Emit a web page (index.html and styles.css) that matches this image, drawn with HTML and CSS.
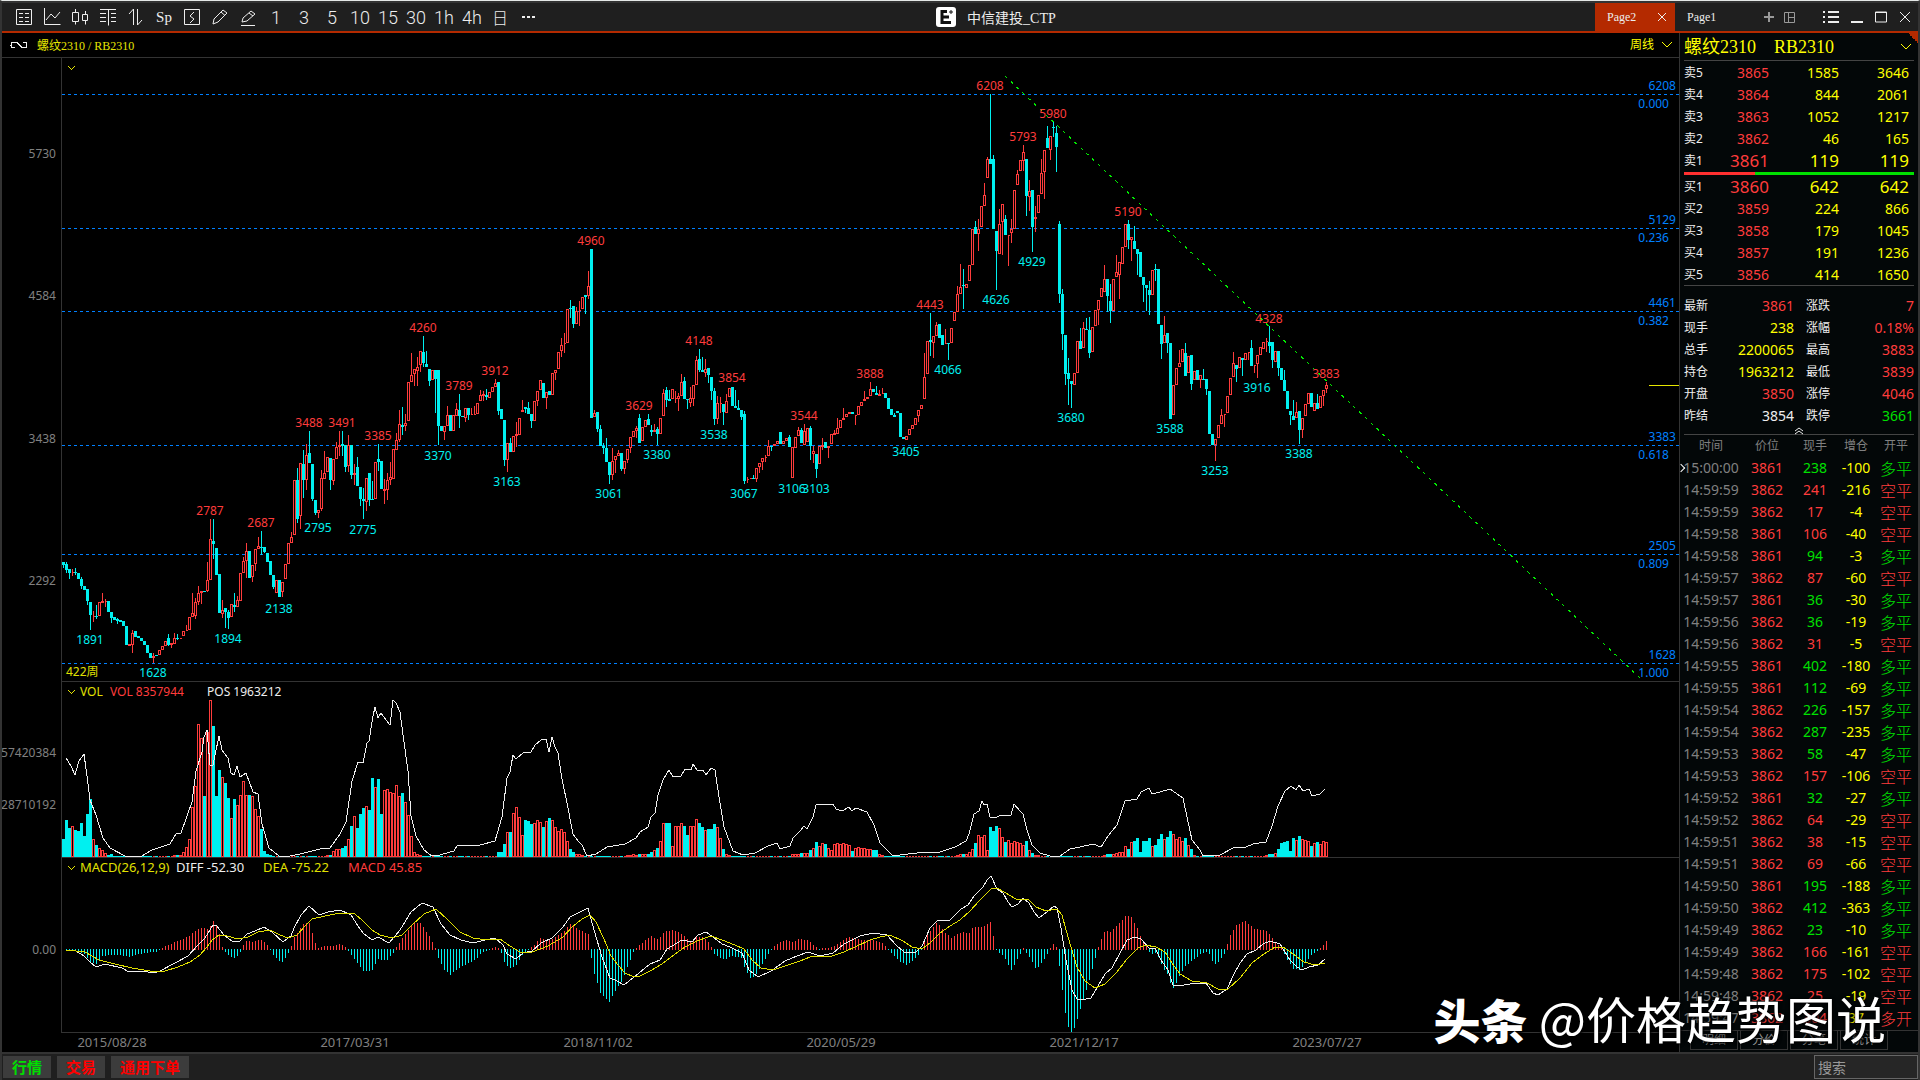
FILE: index.html
```html
<!DOCTYPE html>
<html lang="zh-CN">
<head>
    <meta charset="UTF-8">
    <meta name="viewport" content="width=device-width, initial-scale=1.0">
    <title>中信建投_CTP</title>
    <link rel="stylesheet" href="styles.css">
</head>
<body>

<header class="titlebar">
    <div class="tools">
        <button aria-label="报价"><svg width="18" height="18"><path d="M1.5 1.5h15v15h-15zM4 5.500h4M10 5.500h4M4 9.500h4M10 9.500h4M4 13.500h4M10 13.500h4"/></svg></button>
        <button aria-label="分时"><svg width="18" height="18"><path d="M1.500 0v16.500h16M3 12l5-6 4 4 5-6"/></svg></button>
        <button aria-label="K线"><svg width="18" height="18"><path d="M1.500 4.500h6v9h-6zM4.500 1v3.500M4.500 13.500v3M11.500 6.500h5v6h-5zM14.500 3v3.500M14.500 12.500v4"/></svg></button>
        <button aria-label="T型报价"><svg width="18" height="18"><path d="M1 1.500h16M9.500 1.500v16M1 5.500h6M12 5.500h5M1 9.500h6M12 9.500h5M1 13.500h6M12 13.500h5"/></svg></button>
        <button aria-label="排序"><svg width="18" height="18"><path d="M2 6l4.500-5v16M10.500 1v16l4.500-5"/></svg></button>
        <button class="sp">Sp</button>
        <button aria-label="闪电"><svg width="18" height="18"><path d="M1.500 1.500h15v15h-15zM11 4l-4 4 4 3-4 4"/></svg></button>
        <button aria-label="画线"><svg width="18" height="18"><path d="M2 16l1-5 9-9 4 3-9 9zM10 4l4 3.500"/></svg></button>
        <button aria-label="标注"><svg width="18" height="18"><path d="M3 14l1-4 8-7 4 3-8 7zM10 5l4 3M2 17.500h14"/></svg></button>
        <button>1</button>
        <button>3</button>
        <button>5</button>
        <button>10</button>
        <button>15</button>
        <button>30</button>
        <button>1h</button>
        <button>4h</button>
        <button class="day">日</button>
        <button aria-label="更多"><svg width="18" height="18"><path class="solid" d="M3 8h3v2h-3zM8 8h3v2h-3zM13 8h3v2h-3z"/></svg></button>
    </div>
    <div class="app-title">
        <svg width="20" height="20"><rect class="logo-bg" width="20" height="20" rx="3"/><path class="logo-e" d="M6 4.500h5M6 15.500h9M6 10h7M6 3v14"/><path class="logo-star" d="M13 5h4M15 3v4"/></svg>
        <span>中信建投_CTP</span>
    </div>
    <nav class="tabs">
        <a class="tab active" href="#">Page2 <svg width="10" height="10"><path d="M1 1l8 8M9 1l-8 8"/></svg></a>
        <a class="tab" href="#">Page1</a>
    </nav>
    <div class="window-buttons">
        <button class="dim" aria-label="新建"><svg width="12" height="12"><path class="thick" d="M6 1v10M1 6h10"/></svg></button>
        <button class="dim" aria-label="布局"><svg width="12" height="12"><path d="M1.500 1.500h10v10h-10zM5.500 1v10M5 6.500h6"/></svg></button>
        <button class="gap" aria-label="菜单"><svg width="16" height="14"><path class="thick" d="M0 2h2M5 2h11M0 7h2M5 7h11M0 12h2M5 12h11"/></svg></button>
        <button aria-label="最小化"><svg width="12" height="12"><path class="thick" d="M0 11h12"/></svg></button>
        <button aria-label="最大化"><svg width="12" height="12"><path d="M.5 1h11v10h-11zM0 1.500h12"/></svg></button>
        <button aria-label="关闭"><svg width="12" height="12"><path d="M1 1l10 10M11 1l-10 10"/></svg></button>
    </div>
</header>

<main class="workspace">
    <section class="chart">
        <div class="chart-head">
            <svg class="link-icon" width="18" height="10"><path d="M5 2.500h-3.500v5h3.500M5 2.500h2l5 5M13 2.500h3.500v5h-5M0 5.500h2"/></svg>
            <h1>螺纹2310 / RB2310</h1>
            <label class="period">
                <select aria-label="周期"><option>周线</option><option>日线</option></select>
                <svg width="12" height="8"><path d="M1 1l5 5 5-5"/></svg>
            </label>
        </div>
        <svg class="plot" viewBox="2 58 1677 994" id="plot">
            <path class="frame" d="M2 57.500H1679M61.500 58V1032.500M61 681.500H1679M61 857.500H1679M61 1032.500H1679"/>
            <g class="axis">
                <text x="56" y="158">5730</text>
                <text x="56" y="300">4584</text>
                <text x="56" y="443">3438</text>
                <text x="56" y="585">2292</text>
                <text x="56" y="757">57420384</text>
                <text x="56" y="809">28710192</text>
                <text x="56" y="954">0.00</text>
            </g>
            <g class="dates">
                <text x="112" y="1047">2015/08/28</text>
                <text x="355" y="1047">2017/03/31</text>
                <text x="598" y="1047">2018/11/02</text>
                <text x="841" y="1047">2020/05/29</text>
                <text x="1084" y="1047">2021/12/17</text>
                <text x="1327" y="1047">2023/07/27</text>
            </g>
            <path class="chevron" d="M68 66l3.500 3.500 3.500-3.500M68 690l3.500 3.500 3.500-3.500M68 866l3.500 3.500 3.500-3.500"/>
            <text class="yellow" x="66" y="676">422周</text>
            <text class="yellow" x="80" y="696">VOL</text>
            <text class="red" x="110" y="696">VOL 8357944</text>
            <text class="white" x="207" y="696">POS 1963212</text>
            <g class="macd-legend">
                <text class="yellow" x="80" y="872">MACD(26,12,9)</text>
                <text class="white" x="176" y="872">DIFF -52.30</text>
                <text class="yellow" x="263" y="872">DEA -75.22</text>
                <text class="red" x="348" y="872">MACD 45.85</text>
            </g>
            <path class="last" d="M1649 385.500H1679"/>
            <g id="series"></g>
        </svg>
    </section>

    <aside class="quote">
        <h2>螺纹2310 <span>RB2310</span><button aria-label="展开"><svg width="12" height="8"><path d="M1 1l5 5 5-5"/></svg></button></h2>
        <table class="depth">
            <tbody>
                <tr><th>卖5</th><td>3865</td><td>1585</td><td>3646</td></tr>
                <tr><th>卖4</th><td>3864</td><td>844</td><td>2061</td></tr>
                <tr><th>卖3</th><td>3863</td><td>1052</td><td>1217</td></tr>
                <tr><th>卖2</th><td>3862</td><td>46</td><td>165</td></tr>
                <tr class="best"><th>卖1</th><td>3861</td><td>119</td><td>119</td></tr>
            </tbody>
        </table>
        <div class="ratio"></div>
        <table class="depth">
            <tbody>
                <tr class="best"><th>买1</th><td>3860</td><td>642</td><td>642</td></tr>
                <tr><th>买2</th><td>3859</td><td>224</td><td>866</td></tr>
                <tr><th>买3</th><td>3858</td><td>179</td><td>1045</td></tr>
                <tr><th>买4</th><td>3857</td><td>191</td><td>1236</td></tr>
                <tr><th>买5</th><td>3856</td><td>414</td><td>1650</td></tr>
            </tbody>
        </table>
        <table class="stats">
            <tbody>
                <tr><th>最新</th><td class="red">3861</td><th>涨跌</th><td class="red">7</td></tr>
                <tr><th>现手</th><td class="yellow">238</td><th>涨幅</th><td class="red">0.18%</td></tr>
                <tr><th>总手</th><td class="yellow">2200065</td><th>最高</th><td class="red">3883</td></tr>
                <tr><th>持仓</th><td class="yellow">1963212</td><th>最低</th><td class="red">3839</td></tr>
                <tr><th>开盘</th><td class="red">3850</td><th>涨停</th><td class="red">4046</td></tr>
                <tr><th>昨结</th><td class="white">3854</td><th>跌停</th><td class="green">3661</td></tr>
            </tbody>
        </table>
        <button class="collapse" aria-label="收起"><svg width="10" height="8"><path d="M1 4l4-3 4 3M1 7l4-3 4 3"/></svg></button>
        <table class="ticks">
            <thead><tr><th>时间</th><th>价位</th><th>现手</th><th>增仓</th><th>开平</th></tr></thead>
            <tbody id="ticks"></tbody>
        </table>
        <nav class="views">
            <a href="#">明细</a><a href="#">分价</a><a href="#">分笔</a><a href="#">统计</a>
        </nav>
    </aside>
</main>

<footer class="statusbar">
    <button class="on">行情</button>
    <button>交易</button>
    <button>通用下单</button>
    <input type="text" placeholder="搜索" aria-label="搜索">
</footer>

<div class="watermark"><b>头条</b> @价格趋势图说</div>

<script src="chart.js"></script>
</body>
</html>
```

FILE: styles.css
```css
* {
    box-sizing: border-box;
}
body {
    margin: 0;
    height: 100vh;
    display: flex;
    flex-direction: column;
    overflow: hidden;
    background-color: #000;
    border: 2px solid #333;
    border-top: 1px solid #e4e8e6;
    border-bottom: none;
    color: #eee;
    font-family: "Noto Sans", "Noto Sans CJK SC", sans-serif;
    font-size: 12px;
}
button, select, input {
    margin: 0;
    padding: 0;
    border: none;
    background: none;
    color: inherit;
    font: inherit;
}
a {
    color: inherit;
    text-decoration: none;
}
svg {
    display: block;
    fill: none;
    stroke: currentColor;
}
table {
    border-collapse: collapse;
    table-layout: fixed;
    width: 100%;
}
th, td {
    padding: 0;
    font-weight: normal;
    white-space: nowrap;
}
.red { color: #ff3c3c; }
.yellow { color: #ff0; }
.white { color: #eee; }
.green { color: #00e000; }

/* top bar */
.titlebar {
    flex: none;
    display: flex;
    align-items: center;
    height: 32px;
    border-top: 2px solid #333;
    border-bottom: 2px solid #b42a00;
    background-color: #1f1f1f;
    font-family: "Liberation Serif", "Noto Sans CJK SC", serif;
}
.tools {
    flex: 0 0 48.75%;
    display: flex;
    padding-left: 8px;
}
.tools button {
    display: flex;
    justify-content: center;
    align-items: center;
    width: 28px;
    height: 24px;
    font: 300 18px Roboto, sans-serif;
}
.tools .sp {
    font: 15px "Liberation Serif", serif;
}
.tools .day {
    font: 300 16px "Noto Sans CJK SC", sans-serif;
}
.solid {
    fill: currentColor;
    stroke: none;
}
.thick {
    stroke-width: 2;
}
.app-title {
    flex: 1;
    display: flex;
    align-items: center;
    gap: 11px;
    font-size: 14px;
}
.logo-bg {
    fill: #fff;
    stroke: none;
}
.logo-e {
    stroke: #111;
    stroke-width: 3;
}
.logo-star {
    stroke: #111;
}
.tabs {
    display: flex;
    align-self: stretch;
}
.tab {
    display: flex;
    align-items: center;
    justify-content: space-between;
    width: 80px;
    padding: 0 8px 0 12px;
}
.tab.active {
    background-color: #b42a00;
}
.window-buttons {
    display: flex;
    align-items: center;
    gap: 12px;
    padding: 0 7px 0 8px;
}
.window-buttons .dim {
    color: #999;
    margin-right: -4px;
}
.window-buttons .gap {
    margin-left: 20px;
}

/* main area */
.workspace {
    flex: 1;
    display: flex;
    min-height: 0;
}
.chart {
    flex: 1;
    min-width: 0;
    overflow: hidden;
}
.chart-head {
    display: flex;
    align-items: center;
    height: 25px;
    padding: 0 6px 0 8px;
    border-bottom: 1px solid #333;
    font-family: "Liberation Serif", "Noto Sans CJK SC", serif;
}
.chart-head h1 {
    margin: 0 auto 0 9px;
    color: #e6e600;
    font-size: 12px;
    font-weight: normal;
}
.link-icon {
    shape-rendering: crispEdges;
}
.period {
    display: flex;
    align-items: center;
    gap: 6px;
    color: #ff0;
}
.period select {
    appearance: none;
}
.plot {
    width: 100%;
    height: auto;
    shape-rendering: crispEdges;
}
.plot text {
    stroke: none;
    fill: currentColor;
    font-size: 12px;
}
.plot .axis {
    color: #808080;
    text-anchor: end;
}
.plot .dates {
    color: #808080;
    text-anchor: middle;
}
.plot .dates text, .plot .macd-legend text {
    font-size: 13px;
}
.plot .frame {
    stroke: #333;
}
.plot .chevron, .plot .last {
    stroke: #e6e600;
}
.plot .yellow {
    color: #e0e000;
}
.plot .peak {
    color: #ff3c3c;
    text-anchor: middle;
}
.plot .trough {
    color: #00f0f0;
    text-anchor: middle;
}
.plot .fib-line {
    stroke: #0080ff;
    stroke-dasharray: 3 3;
}
.plot .fib-text {
    color: #0080ff;
    text-anchor: end;
}
.plot .trend {
    stroke: #00f000;
    stroke-dasharray: 3 5;
}
.plot .up {
    stroke: #ff3c3c;
    fill: #000;
}
.plot .down {
    stroke: none;
    fill: #00f0f0;
}
.plot .down-line {
    stroke: #00f0f0;
}
.plot .pos {
    stroke: #f0f0f0;
}
.plot .dea {
    stroke: #e0e000;
}

/* quote panel */
.quote {
    flex: 0 0 239px;
    display: flex;
    flex-direction: column;
    overflow: hidden;
    border-left: 1px solid #333;
    background: linear-gradient(to bottom left, #b42a00 50%, transparent 50%) top right / 10px 10px no-repeat #030708;
    font-size: 14px;
}
.quote h2 {
    flex: none;
    display: flex;
    align-items: baseline;
    height: 28px;
    margin: 0 4px;
    border-bottom: 1px solid #444;
    color: #ff0;
    font: 18px/28px "Liberation Serif", "Noto Sans CJK SC", serif;
}
.quote h2 span {
    margin: 0 auto 0 18px;
}
.quote h2 button {
    align-self: center;
    margin-right: 2px;
}
.quote th {
    font-size: 12px;
    text-align: left;
}
.quote td, .quote th {
    height: 22px;
    line-height: 20px;
}
.depth {
    margin: 1px 9px 0 4px;
    width: calc(100% - 13px);
    color: #ff0;
    text-align: right;
}
.depth th {
    width: 30px;
    color: #eee;
}
.depth td:nth-child(2) {
    width: 55px;
    color: #ff3c3c;
}
.depth .best td {
    font-size: 17px;
}
.ratio {
    flex: none;
    height: 3px;
    margin: 0 4px;
    background: linear-gradient(to right, #ff3030 31%, #00e000 31%);
}
.stats {
    width: calc(100% - 8px);
    margin: 9px 4px 0;
    text-align: right;
    box-shadow: 0 -9px #030708, 0 -10px #444;
}
.stats th {
    width: 28px;
}
.stats th:nth-child(3) {
    width: 40px;
    padding-left: 12px;
}
.stats td:nth-child(2) {
    width: 82px;
}
.collapse {
    flex: none;
    display: flex;
    justify-content: center;
    height: 8px;
    margin: 0 4px;
    border-bottom: 1px solid #444;
}
.ticks {
    text-align: center;
}
.ticks th {
    color: #808080;
    text-align: center;
}
.ticks th:nth-child(1) { width: 62px; }
.ticks th:nth-child(2) { width: 50px; }
.ticks th:nth-child(3) { width: 46px; }
.ticks th:nth-child(4) { width: 36px; }
.ticks td:first-child {
    color: #808080;
}
.ticks td:nth-child(4) {
    color: #ff0;
}
.ticks td:last-child {
    font: 300 16px/20px "Noto Sans CJK SC", sans-serif;
}
/* marker on the newest tick */
.ticks tr:first-child td:first-child {
    position: relative;
}
.ticks tr:first-child td:first-child::before {
    content: "";
    position: absolute;
    left: -2px;
    top: 8px;
    width: 5px;
    height: 5px;
    border: 1px solid #fff;
    border-width: 1px 1px 0 0;
    transform: rotate(45deg);
}
.views {
    flex: none;
    display: flex;
    gap: 2px;
    height: 22px;
    margin-top: auto;
    padding-left: 10px;
    border-top: 1px solid #333;
    color: #999;
    font-size: 12px;
    line-height: 18px;
}
.views a {
    width: 48px;
    height: 19px;
    border: 1px solid #333;
    border-top: none;
    text-align: center;
}

/* bottom bar */
.statusbar {
    flex: none;
    display: flex;
    align-items: center;
    gap: 6px;
    height: 28px;
    padding-left: 1px;
    border-top: 2px solid #333;
    background-color: #1f1f1f;
}
.statusbar button {
    height: 22px;
    padding: 0 9px;
    background-color: #3c3c3c;
    color: #f00;
    font: bold 15px/22px "Noto Sans CJK SC", sans-serif;
}
.statusbar .on {
    color: #00e000;
}
.statusbar input {
    width: 104px;
    height: 24px;
    margin-left: auto;
    padding-left: 3px;
    border: 1px solid #666;
    background-color: #262626;
    font-size: 14px;
}
.statusbar input::placeholder {
    color: #999;
}

.watermark {
    position: absolute;
    right: 34px;
    bottom: 26px;
    color: #fff;
    font-family: "Noto Sans CJK SC", sans-serif;
    font-size: 50px;
    line-height: 70px;
    text-shadow: 0 0 4px #000, 1px 1px 3px #000;
    pointer-events: none;
}
.watermark b {
    font-size: 47px;
    font-weight: 900;
}
```

FILE: chart.js
```js
// weekly candles: colour, body top, body bottom, high, low
const candles = `c562,565,562,568 c564,570,562,573 c569,573,569,579 r572,573,569,576 c572,573,568,575 c573,579 c579,586,577,589 c586,590 c589,601,589,605 c602,615,602,630
r616,617,611,622 c616,617,605,619 r602,616 r601,603,593,603 r601,602,599,607 c601,612 c612,618,612,623 c617,620 c619,621,618,624 c620,622
c621,626 c626,645 r644,646 r633,645,630,653 c631,637 c636,638 c638,641 c641,645 c645,653 c653,658
r656,658,653,663 c655,656 r650,655 r646,650 r641,646 c638,645,634,646 r643,645,643,648 r638,644,633,644 c638,639,634,640 r638,639
r631,636 r630,631,625,631 r617,630 r613,617,593,617 r602,616,598,619 r593,602,586,605 r591,593,591,604 c591,592 r580,591,562,592 r539,580,519,580
c541,544,519,559 c548,575 c574,613 r610,614,600,618 c608,612,608,628 c612,618,610,629 r604,617 c605,607,593,612 r600,607,596,607 r573,601
r561,573,557,573 r551,561,543,578 c551,578 r565,577,565,582 r549,564,549,571 r546,549,537,549 c547,548,531,555 c547,552,547,553 c553,562 c561,575
c575,587,575,589 r580,593 c580,597 r582,592,582,597 r564,579 r543,564 r537,543,532,543 r480,535 c480,519,468,523 r463,516,463,529
c464,480,450,498 r455,480,444,490 c453,463,431,463 c464,499,464,501 c500,513,500,515 r510,513,510,518 r478,509,470,511 r473,479,451,479 r457,472 c458,480,458,490
r459,481,459,485 r447,459,442,459 r445,447,431,456 c444,446,431,456 c445,467,445,472 r445,466,435,472 c445,475,445,479 r473,475,464,485 c467,486,457,486 c487,499,487,506
c499,501,488,519 r478,502,478,511 c473,500,473,506 c499,500,481,500 r462,499 c459,462,444,471 c461,489 r489,491,479,504 r480,490,473,500 r477,480,462,485
r449,479 r440,450,433,450 r424,440,410,442 c425,427,407,435 r423,426,414,431 r382,421 r375,382,353,382 r369,374,369,386 r367,371,357,386 r351,365,351,372
c352,363,336,367 c364,367,351,367 c369,381,369,386 r370,380 c370,379,370,413 c370,426,370,445 c426,431 r426,432,426,440 r415,426,406,426 c415,431
r415,431 r409,416,403,416 c410,416,394,428 c416,417 r408,418,408,422 c408,415,408,420 r414,415,408,415 r414,415,406,415 r403,414 r395,401,390,401
r394,396,391,401 c395,397,389,400 r392,398 r387,392 r383,387,379,387 c382,411,382,415 c409,419 c420,460,420,466 r443,460,443,472 c443,452,438,452
r436,452 r434,436,422,447 r418,435 r410,412,400,412 c407,409,407,413 c408,414,402,414 c414,421,414,428 r401,421 r391,401,391,406 r380,390
c383,398 r392,398,392,409 c391,395 r373,395 r370,373,370,380 r352,369 r345,351,338,357 r343,344,333,353 r309,343 c308,309,300,318
c306,324,306,328 r311,324,307,324 r310,311,301,326 r297,309 c295,297,295,314 r286,296,271,299 c249,418 r413,417,410,417 c412,429,412,432 c429,446,425,446
c446,448,443,454 c448,462,438,462 c462,475,462,484 r461,475,448,480 r456,460,456,473 r453,456,450,456 c453,469,453,471 r461,469,461,474 r449,460,449,463 r437,448,437,453
r431,437 r428,431,426,438 c418,443,414,443 r427,441 r420,427 c419,425,414,425 c430,432,425,436 r430,432,424,432 c429,434,427,445 r418,434
r393,416,389,416 c390,400,387,407 c399,401,390,401 r389,399 r398,399,391,403 r396,399,393,411 r382,396,374,396 c381,399,377,399 c399,400,399,409 r398,403,387,407
r385,399,385,406 r360,385,356,385 c359,370,349,372 c370,372,357,372 r369,373,359,377 c368,375,368,383 c377,391,377,400 c391,419,388,425 r403,419,396,424 r403,404,397,413
c404,412,404,425 r401,413,394,413 r388,397 c387,406 c406,408,390,408 c408,410,400,410 c410,417,410,420 c414,481,411,484 r479,480,477,483 r478,479
c478,479,475,479 r468,479,468,482 r463,467,463,473 r458,462,458,470 r457,458,455,462 r446,456,440,456 c446,447,446,451 r444,446 r441,444 c432,444
r441,444 r438,441 c437,447,435,447 r447,478 r437,448 r430,436,427,436 c430,443,428,443 r431,445,424,445 r428,442 c428,446,426,460
r451,454,446,463 c454,469,454,478 r446,464 r445,447,438,450 c442,448 r446,448,446,458 r434,444 r433,435,430,435 r428,434,418,434 r420,428
r418,420,408,420 r414,417 r412,414 c412,414 r415,416,415,425 r406,415 r402,406 r399,401,391,401 r397,399 r389,396,382,396
c389,392 c393,395,386,395 r394,396,390,396 r393,394,388,394 c393,398 c398,409 c409,415 c415,417,413,417 c411,413 c413,437
c437,439 r436,440 r429,435 r425,429 r418,425 r410,416,410,422 r405,409 r377,399,353,399 r341,374 c340,342,313,356
r336,343,336,358 r325,336,322,336 c324,338 c335,345 r343,344,329,344 c343,344,343,360 r328,343 r312,321 r294,312,286,312 r287,294,264,294
c285,286,269,309 r284,288 r265,281 r229,265 c227,234,221,234 r229,234,219,251 r206,227 r195,206,183,206 r159,178,157,178 c159,164,94,164
c159,229,155,229 c231,251,231,290 r224,254,209,254 r204,222,204,255 c219,235,215,235 r235,236,235,266 r229,233,219,243 r190,229 r174,185,170,185 r160,171
r152,161,145,171 c159,196,159,216 r191,197,180,211 c190,227,190,252 r217,219,206,232 r195,213 r173,194,159,194 r150,172,150,199 c138,148,126,148 r136,150,136,160
c127,128,122,137 c133,147,126,172 c224,294,221,303 c294,334,289,350 c335,374,335,385 c373,379,358,405 c381,384,381,408 r373,385 r341,373 c341,349,328,349
r328,348,322,348 c329,330,318,330 c330,353,317,358 r327,352 r310,326 r300,310,300,325 r288,297 r279,292,265,292 c279,296,279,312 c301,311,284,323
r279,311 r272,277,255,277 r262,275,262,299 r247,264 r224,247 c224,240,220,249 r237,240,237,261 c241,249,226,249 c249,254,249,275 c252,277
c277,285,277,302 c285,288,285,311 c290,295,281,315 r270,295 c269,270,264,281 c269,324 c325,344,325,359 r335,343,316,343 c333,343,333,353 c343,419
r385,415 r368,385 r363,367,350,367 r349,362 c353,376,343,376 r356,373 c355,384,355,390 r371,380 c370,380 r375,380,375,388
c379,380,369,380 c379,389,379,395 c391,434 c434,445 r439,445,439,461 r425,438 r415,424,409,424 r414,415,414,427 r396,413 r378,395
r363,377,352,377 c365,369,365,382 r357,368 c358,360,358,376 r353,360 r352,353,352,360 c348,366,340,366 r365,366,365,373 r355,364,355,378 r347,355
r342,349 r341,342,338,352 c342,346,326,353 c342,360,342,368 r351,362 c351,368,351,376 c368,380 c380,391,370,391 c391,409 c411,415,411,425
c416,420,400,420 r412,418,402,418 c411,430,411,444 r418,430,418,438 r404,416 r393,404 c393,407 r403,411 c403,409,394,409 r396,408
r390,396,390,406 r385,389,382,393`.split(/\s+/);

// volume bars: first week, then heights
const volumes = [
    [0, '18 37 29 31 27 26 34 21 43 58 18 12 9 7 4 2 3'],
    [37, '2 2 2 5 10 18 50 71 133 119 61 125 157 131 61 87 80 74 59 39 58 52 62 76 62 62 61 48 41 28 6 3 2'],
    [88, '2 2 6 8 8 9 11 18 31 41 29 43 49 51 47 79 70 78 43 67 68 65 64 72 61 64 55 42 21 5 3 2'],
    [145, '5 5 13 25 25 44 50 40 22 37 36 33 34 37 35 30 36 39 37 30 26 28 25 16 8 5 3 3 2'],
    [188, '2 2 3 2 3 3 3 3 5 7 9 16 34 34 34 11 31 31 34 31 22 31 31 38 34 30 27 28 28 33 30 19 8 3 2'],
    [243, '3 3 3 4 4 4 7 9 15 11 14 13 9 7 13 14 13 14 13 12 6 9 10 9 9 8 8 7 7 3 2'],
    [298, '2 3 3 3 5 8 14 22 20 22 7 30 26 31 29 20 15 17 14 16 15 14 12 16 7 4 2 2'],
    [347, '2 3 3 3 4 5 5 11 8 15 16 19 5 16 16 19 11 12 18 23 18 20 26 23 18 20 16 19 12 8 2'],
    [401, '2 3 3 4 8 14 15 16 6 19 17 21 18 17 16 11 14 15 13 16 15']
];

const posLine = '66,758 71,766 75,775 79,761 84,754 87,776 90,800 96,815 103,838 110,848 125,856 142,856 152,850 170,844 176,834 181,833 187,816 192,802 196,771 202,752 204,737 207,730 210,765 213,765 219,736 222,750 228,758 231,773 234,775 237,766 240,777 246,773 253,792 258,794 262,824 269,848 279,856 290,856 300,854 320,849 330,848 340,834 346,822 352,781 358,762 363,763 367,743 369,741 373,716 375,707 378,718 381,713 386,720 390,725 393,700 396,703 400,712 404,742 408,771 411,816 416,836 424,850 432,856 440,855 450,852 454,851 457,846 480,845 495,841 502,817 507,778 510,772 513,755 516,759 523,753 531,752 535,745 541,740 546,739 549,752 552,737 555,747 558,753 562,779 567,803 573,834 578,841 582,845 587,856 596,854 607,847 625,844 636,838 640,832 648,827 651,817 655,813 658,795 663,780 669,770 673,777 681,776 685,769 691,770 693,764 697,770 703,770 706,775 711,768 715,770 719,797 724,827 733,851 743,855 755,853 768,846 777,843 780,849 790,846 793,838 800,831 804,826 807,829 813,817 816,805 833,804 836,809 842,811 849,807 852,811 856,808 867,812 874,825 880,843 893,856 900,855 925,852 940,852 955,847 966,841 969,834 974,814 979,811 982,801 984,805 987,804 990,817 994,818 1002,815 1011,815 1014,804 1020,811 1023,814 1027,830 1032,845 1040,853 1050,856 1060,856 1070,849 1080,847 1093,844 1101,847 1108,836 1117,825 1121,813 1125,801 1137,799 1141,792 1149,788 1152,794 1160,792 1170,789 1183,798 1187,817 1192,840 1200,850 1203,856 1220,855 1235,847 1246,847 1253,844 1266,842 1272,826 1278,806 1285,791 1291,786 1296,790 1299,785 1303,791 1309,789 1312,796 1320,794 1325,789';
const diffLine = '66,950 76,951 84,956 90,962 96,967 105,964 122,968 129,972 143,971 153,973 160,971 175,963 188,956 197,946 205,938 213,925 216,925 224,935 233,942 240,941 247,934 255,931 264,927 272,932 283,942 291,936 294,928 301,915 309,906 319,915 328,912 340,910 351,915 358,926 363,933 372,940 378,937 389,943 400,930 411,912 422,903 433,907 441,924 450,935 461,940 473,943 485,940 495,938 503,945 507,954 516,959 523,953 532,951 541,943 552,938 563,927 570,917 588,908 594,930 602,957 610,978 617,981 624,985 634,977 650,964 660,960 667,949 682,940 692,942 698,935 706,932 713,937 722,944 730,947 742,953 749,970 758,977 771,971 785,961 797,956 808,952 820,956 833,953 844,944 860,936 873,933 887,935 896,945 904,952 916,952 922,946 930,928 937,921 950,920 961,909 968,905 974,896 983,887 987,880 991,876 997,889 1003,893 1008,902 1012,907 1018,904 1023,898 1029,903 1034,912 1039,918 1048,911 1054,906 1057,908 1061,928 1066,960 1072,990 1077,999 1081,1000 1091,998 1098,986 1105,974 1112,968 1120,953 1127,940 1135,937 1141,939 1149,948 1155,948 1161,960 1168,970 1173,985 1178,986 1190,984 1206,983 1213,993 1218,995 1227,989 1234,974 1240,963 1247,954 1256,950 1263,944 1270,941 1280,944 1290,960 1297,967 1302,970 1309,967 1318,965 1325,959';
const deaLine = '66,950 85,952 99,960 115,964 132,968 150,971 165,971 178,967 190,962 200,955 207,947 212,940 219,935 227,936 238,939 248,937 258,932 270,930 280,935 288,938 297,935 305,926 312,919 325,916 340,913 355,914 363,921 372,930 380,935 392,938 402,935 412,925 424,914 436,909 448,920 460,932 473,938 487,940 500,939 510,946 520,952 532,952 548,946 563,937 572,927 582,919 590,915 596,922 604,939 611,956 618,965 625,973 634,977 640,976 650,971 662,964 675,954 685,947 697,941 711,936 722,940 735,945 744,949 752,960 761,968 773,970 785,966 800,961 810,957 832,956 844,952 855,947 870,940 880,937 890,935 903,941 912,947 922,949 930,943 940,933 950,926 960,920 970,911 980,900 991,889 997,888 1004,892 1016,899 1028,899 1036,907 1046,911 1057,909 1062,915 1066,930 1071,947 1077,967 1085,981 1095,988 1105,984 1116,973 1127,959 1138,948 1145,945 1156,947 1165,952 1172,963 1180,974 1192,981 1207,983 1218,989 1228,989 1240,978 1252,963 1264,954 1275,947 1283,947 1293,954 1304,962 1315,965 1325,963';
// macd histogram, interpolated for the weeks in between
const hist = '68,0 76,-1 84,-4 90,-12 96,-14 102,-6 110,-5 120,-5 129,-7 139,-4 150,-2 156,-2 160,0 163,2 175,7 187,12 198,20 204,21 208,20 213,28 217,23 222,2 225,-2 230,-7 235,-8 240,-2 243,4 246,8 252,7 260,10 266,5 270,0 273,-5 281,-13 287,-5 290,0 294,12 303,25 309,26 314,9 317,1 325,3 332,3 340,5 346,1 350,-4 356,-12 364,-22 372,-20 378,-9 386,-11 393,-3 397,3 404,14 413,26 420,26 430,11 435,1 438,-8 444,-20 450,-25 457,-19 468,-13 475,-10 482,-2 489,0 496,2 499,0 502,-5 505,-15 511,-19 516,-15 522,-5 528,0 532,2 540,11 548,8 556,12 564,18 570,25 577,20 588,15 589,15 591,-8 594,-24 600,-43 609,-52 615,-41 622,-30 628,-15 633,-2 638,3 645,9 650,13 658,9 664,17 672,19 680,16 690,8 696,12 703,12 709,6 711,2 714,-4 724,-10 732,-6 741,-8 745,-20 750,-28 754,-27 760,-17 766,-7 771,0 775,4 785,9 792,7 799,10 808,9 814,3 818,0 825,1 832,2 838,6 848,12 860,9 874,9 882,6 888,0 892,-4 900,-12 907,-15 913,-10 919,-4 922,2 928,16 937,27 943,18 951,11 961,17 969,16 973,22 980,22 986,24 991,28 993,13 996,0 1003,-6 1011,-20 1019,-6 1023,1 1028,-5 1036,-20 1044,-9 1049,0 1053,5 1057,1 1060,-24 1063,-48 1066,-70 1069,-80 1072,-83 1075,-76 1081,-56 1090,-27 1095,-8 1098,2 1101,10 1105,19 1110,17 1119,26 1126,34 1131,32 1138,19 1142,7 1147,2 1150,-4 1156,-3 1164,-20 1168,-25 1171,-37 1174,-38 1178,-28 1185,-16 1193,-10 1200,-4 1208,-2 1214,-15 1220,-10 1225,-2 1229,12 1235,23 1245,28 1254,20 1267,18 1273,9 1281,1 1286,-8 1293,-19 1300,-20 1306,-12 1312,-4 1318,-1 1321,2 1326,8'
    .split(' ').map(p => p.split(',').map(Number));

const peaks = [[210, 515, 2787], [261, 527, 2687], [309, 427, 3488], [342, 427, 3491], [378, 440, 3385], [423, 332, 4260], [459, 390, 3789], [495, 375, 3912], [591, 245, 4960], [639, 410, 3629], [699, 345, 4148], [732, 382, 3854], [804, 420, 3544], [870, 378, 3888], [930, 309, 4443], [990, 90, 6208], [1023, 141, 5793], [1053, 118, 5980], [1128, 216, 5190], [1269, 323, 4328], [1326, 378, 3883]];
const troughs = [[90, 644, 1891], [153, 677, 1628], [228, 643, 1894], [279, 613, 2138], [318, 532, 2795], [363, 534, 2775], [438, 460, 3370], [507, 486, 3163], [609, 498, 3061], [657, 459, 3380], [714, 439, 3538], [744, 498, 3067], [792, 493, 3106], [816, 493, 3103], [906, 456, 3405], [948, 374, 4066], [996, 304, 4626], [1032, 266, 4929], [1071, 422, 3680], [1170, 433, 3588], [1215, 475, 3253], [1257, 392, 3916], [1299, 458, 3388]];
const fibs = [[94, 6208, '0.000'], [228, 5129, '0.236'], [311, 4461, '0.382'], [445, 3383, '0.618'], [554, 2505, '0.809'], [663, 1628, '1.000']];

const STEP = 3;
const weekX = i => 63 + i * STEP;

let up = '', down = '';
candles.forEach((s, i) => {
    const v = s.slice(1).split(',').map(Number);
    const top = v[0], bottom = v[1], high = v[2] || top, low = v[3] || bottom;
    const x = weekX(i);
    if (s[0] === 'r') {
        up += `M${x + .5} ${high}V${top}M${x + .5} ${bottom}V${low}M${x - .5} ${top + .5}h2V${Math.max(bottom, top + 1) - .5}h-2z`;
    } else {
        down += `M${x - 1} ${top}h3V${bottom}h-3zM${x} ${high}h1V${low}h-1z`;
    }
});

const heights = candles.map(() => 1);
volumes.forEach(([start, list]) => list.split(' ').forEach((h, k) => heights[start + k] = +h));
heights.forEach((h, i) => {
    const x = weekX(i);
    if (candles[i][0] === 'r') {
        up += `M${x - .5} 856.500v${1 - h}h2v${h - 1}z`;
    } else {
        down += `M${x - 1} 857v${-h}h3v${h}z`;
    }
});

let histUp = '', histDown = '';
for (let i = 1, k = 0; i < candles.length; i++) {
    const x = weekX(i);
    while (k < hist.length - 2 && hist[k + 1][0] < x) k++;
    const [x0, y0] = hist[k], [x1, y1] = hist[k + 1];
    const t = Math.min(1, Math.max(0, (x - x0) / (x1 - x0)));
    const h = Math.round(y0 + (y1 - y0) * t);
    if (h > 0) histUp += `M${x + .5} 950v${-h - 1}`;
    else histDown += `M${x + .5} 949v${1 - h}`;
}

let out = '';
fibs.forEach(([y, price, ratio]) => {
    out += `<path class="fib-line" d="M62 ${y + .5}H1679"/>
        <text class="fib-text" x="1676" y="${y - 4}">${price}</text>
        <text class="fib-text" x="1669" y="${y + 14}">${ratio}</text>`;
});
out += `<path class="up" d="${up}"/><path class="down" d="${down}"/>
    <path class="up" d="${histUp}"/><path class="down-line" d="${histDown}"/>
    <polyline class="pos" points="${posLine}"/>
    <polyline class="pos" points="${diffLine}"/>
    <polyline class="dea" points="${deaLine}"/>
    <path class="trend" d="M1005 76L1640 678"/>`;
peaks.forEach(([x, y, v]) => out += `<text class="peak" x="${x}" y="${y}">${v}</text>`);
troughs.forEach(([x, y, v]) => out += `<text class="trough" x="${x}" y="${y}">${v}</text>`);
document.getElementById('series').innerHTML = out;

// time, price, lots, open interest change, side
const ticks = [
    ['15:00:00', 3861, 238, -100, '多平'], ['14:59:59', 3862, 241, -216, '空平'], ['14:59:59', 3862, 17, -4, '空平'],
    ['14:59:58', 3861, 106, -40, '空平'], ['14:59:58', 3861, 94, -3, '多平'], ['14:59:57', 3862, 87, -60, '空平'],
    ['14:59:57', 3861, 36, -30, '多平'], ['14:59:56', 3862, 36, -19, '多平'], ['14:59:56', 3862, 31, -5, '空平'],
    ['14:59:55', 3861, 402, -180, '多平'], ['14:59:55', 3861, 112, -69, '多平'], ['14:59:54', 3862, 226, -157, '多平'],
    ['14:59:54', 3862, 287, -235, '多平'], ['14:59:53', 3862, 58, -47, '多平'], ['14:59:53', 3862, 157, -106, '空平'],
    ['14:59:52', 3861, 32, -27, '多平'], ['14:59:52', 3862, 64, -29, '空平'], ['14:59:51', 3862, 38, -15, '空平'],
    ['14:59:51', 3862, 69, -66, '空平'], ['14:59:50', 3861, 195, -188, '多平'], ['14:59:50', 3862, 412, -363, '多平'],
    ['14:59:49', 3862, 23, -10, '多平'], ['14:59:49', 3862, 166, -161, '空平'], ['14:59:48', 3862, 175, -102, '空平'],
    ['14:59:48', 3862, 25, -19, '空平'], ['14:59:47', 3862, 304, 37, '多开']
];
document.getElementById('ticks').innerHTML = ticks.map(([time, price, lots, oi, side]) => {
    const cls = side === '多平' ? 'green' : 'red';
    return `<tr><td>${time}</td><td class="red">${price}</td><td class="${cls}">${lots}</td><td>${oi}</td><td class="${cls}">${side}</td></tr>`;
}).join('');
```
